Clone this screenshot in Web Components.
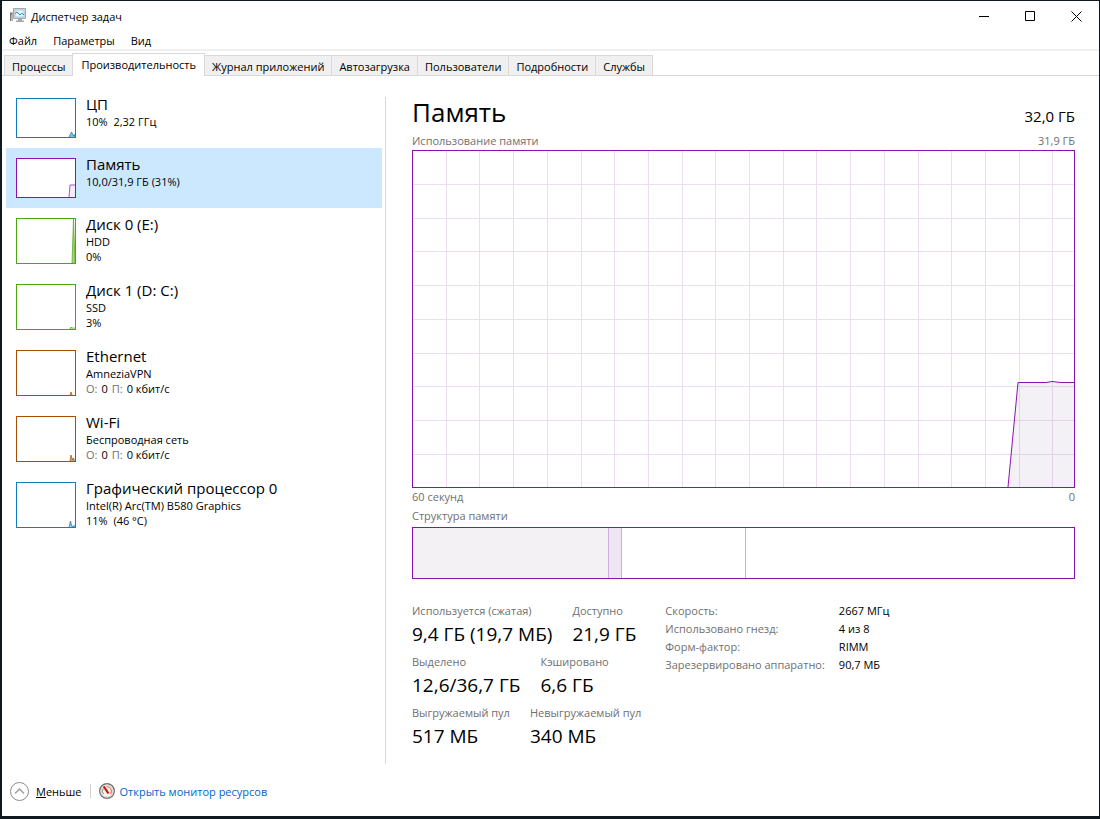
<!DOCTYPE html>
<html lang="ru">
<head>
<meta charset="utf-8">
<meta name="viewport" content="width=device-width, initial-scale=1">
<title>Диспетчер задач</title>
<style>
  body {
    margin: 0;
    background: #101820;
    color: #000;
    font: 11px/15px "Open Sans", "Noto Sans", sans-serif;
    --memory: #8b12ae;
    --muted: #707070;
    --line: #d9d9d9;
  }
</style>
</head>
<body>
<task-window>
  <title-bar slot="title">Диспетчер задач</title-bar>
  <menu-bar slot="menu">
    <menu-entry>Файл</menu-entry>
    <menu-entry>Параметры</menu-entry>
    <menu-entry>Вид</menu-entry>
  </menu-bar>
  <tab-strip slot="tabs">
    <tab-item>Процессы</tab-item>
    <tab-item selected>Производительность</tab-item>
    <tab-item>Журнал приложений</tab-item>
    <tab-item>Автозагрузка</tab-item>
    <tab-item>Пользователи</tab-item>
    <tab-item>Подробности</tab-item>
    <tab-item>Службы</tab-item>
  </tab-strip>

  <resource-item slot="resources" kind="cpu">
    ЦП
    <span slot="info">10%&nbsp; 2,32 ГГц</span>
  </resource-item>
  <resource-item slot="resources" kind="memory" selected>
    Память
    <span slot="info">10,0/31,9 ГБ (31%)</span>
  </resource-item>
  <resource-item slot="resources" kind="hdd">
    Диск 0 (E:)
    <span slot="info">HDD</span>
    <span slot="info">0%</span>
  </resource-item>
  <resource-item slot="resources" kind="ssd">
    Диск 1 (D: C:)
    <span slot="info">SSD</span>
    <span slot="info">3%</span>
  </resource-item>
  <resource-item slot="resources" kind="ethernet">
    Ethernet
    <span slot="info">AmneziaVPN</span>
    <net-rate slot="info" sent="0" received="0 кбит/с"></net-rate>
  </resource-item>
  <resource-item slot="resources" kind="wifi">
    Wi-Fi
    <span slot="info">Беспроводная сеть</span>
    <net-rate slot="info" sent="0" received="0 кбит/с"></net-rate>
  </resource-item>
  <resource-item slot="resources" kind="gpu">
    Графический процессор 0
    <span slot="info">Intel(R) Arc(TM) B580 Graphics</span>
    <span slot="info">11%&nbsp; (46 °C)</span>
  </resource-item>

  <memory-panel slot="panel">
    <span slot="heading">Память</span>
    <span slot="total">32,0 ГБ</span>
    <stat-row slot="stats">
      <stat-value label="Используется (сжатая)">9,4 ГБ (19,7 МБ)</stat-value>
      <stat-value label="Доступно">21,9 ГБ</stat-value>
    </stat-row>
    <stat-row slot="stats">
      <stat-value label="Выделено">12,6/36,7 ГБ</stat-value>
      <stat-value label="Кэшировано">6,6 ГБ</stat-value>
    </stat-row>
    <stat-row slot="stats">
      <stat-value label="Выгружаемый пул">517 МБ</stat-value>
      <stat-value label="Невыгружаемый пул">340 МБ</stat-value>
    </stat-row>
    <memory-details slot="details"></memory-details>
  </memory-panel>

  <window-footer slot="footer"></window-footer>
</task-window>

<script>
const define = (name, html, setup) => {
  const template = document.createElement('template');
  template.innerHTML = html;

  customElements.define(name, class extends HTMLElement {
    constructor() {
      super();
      this.attachShadow({ mode: 'open' });
      this.shadowRoot.appendChild(template.content.cloneNode(true));
    }

    connectedCallback() {
      if (setup) setup(this, this.shadowRoot);
    }
  });
};

define('task-window', `
  <style>
    :host {
      display: flex;
      flex-direction: column;
      box-sizing: border-box;
      min-height: 100vh;
      border: solid #101820;
      border-width: 1px 1px 3px 2px;
      background: #fff;
    }
    main { display: flex; flex: 1; }
    nav {
      flex: none;
      width: 376px;
      padding: 12px 3px 0 4px;
    }
    .divider {
      flex: none;
      width: 1px;
      margin-top: 21px;
      background: var(--line);
    }
    section { display: flex; flex: 1; min-width: 0; }
  </style>
  <slot name="title"></slot>
  <slot name="menu"></slot>
  <slot name="tabs"></slot>
  <main>
    <nav><slot name="resources"></slot></nav>
    <div class="divider"></div>
    <section><slot name="panel"></slot></section>
  </main>
  <slot name="footer"></slot>
`);

define('title-bar', `
  <style>
    :host { display: flex; align-items: center; height: 30px; padding-left: 8px; }
    .icon { flex: none; width: 16px; height: 16px; margin-right: 5px; }
    .caption { flex: 1; }
    button {
      display: flex;
      align-items: center;
      justify-content: center;
      width: 46px;
      height: 30px;
      padding: 0;
      border: 0;
      background: none;
    }
    button svg { width: 11px; height: 11px; fill: none; stroke: #000; }
  </style>
  <svg class="icon" viewBox="0 0 16 16" aria-hidden="true">
    <path d="M0 4h3v9H0z" fill="#b5b5b5"/>
    <path d="M.5 5v8" stroke="#7d7d7d"/>
    <path d="M1 5h1v2H1z" fill="#37b34a"/>
    <path d="M3.500.5h12v10h-12z" fill="#d9dcdf" stroke="#a3a8ac"/>
    <path d="M5 2h9v7H5z" fill="#e2f4fd" stroke="#8fb9d0" stroke-width=".6"/>
    <path d="M5 5.500l2-1.500 3 3 1.500-1.500L14 6.500" fill="none" stroke="#1b8dc9"/>
    <path d="M8 11h4v1.500h2V14H6v-1.500h2z" fill="#a4a8ab"/>
  </svg>
  <span class="caption"><slot></slot></span>
  <button aria-label="Свернуть"><svg viewBox="0 0 11 11"><path d="M0 5.500h10"/></svg></button>
  <button aria-label="Развернуть"><svg viewBox="0 0 11 11"><path d="M.5.5h9v9h-9z"/></svg></button>
  <button aria-label="Закрыть"><svg viewBox="0 0 11 11"><path d="M.5.5l10 10M10.500.5l-10 10"/></svg></button>
`);

define('menu-bar', `
  <style>
    :host {
      display: flex;
      gap: 16px;
      height: 18px;
      padding: 0 7px;
      border-bottom: 2px solid #f0f0f0;
    }
  </style>
  <slot></slot>
`);

define('menu-entry', `
  <style>
    :host { display: block; }
    button {
      display: block;
      padding: 0;
      border: 0;
      background: none;
      color: inherit;
      font: inherit;
      line-height: 20px;
    }
  </style>
  <button><slot></slot></button>
`);

define('tab-strip', `
  <style>
    :host {
      display: flex;
      align-items: flex-end;
      height: 24px;
      padding: 0 2px;
      border-bottom: 1px solid var(--line);
    }
  </style>
  <slot></slot>
`);

define('tab-item', `
  <style>
    :host { display: block; margin-right: -1px; }
    button {
      display: block;
      height: 20px;
      padding: 1px 7px 0;
      border: 1px solid var(--line);
      border-bottom: 0;
      background: #f0f0f0;
      color: inherit;
      font: inherit;
    }
    :host([selected]) { position: relative; z-index: 1; margin-bottom: -1px; }
    :host([selected]) button { height: 23px; padding: 0 8px 2px; background: #fff; }
  </style>
  <button role="tab"><slot></slot></button>
`, (host, root) => {
  root.querySelector('button').setAttribute('aria-selected', host.hasAttribute('selected'));
});

const thumbs = {
  cpu: { color: '#117dbb', height: 40, path: 'M53 39l2.500-5 2 4 1.500-2v3' },
  memory: { color: '#8b12ae', height: 40, path: 'M53 39l1-12h6v12' },
  hdd: { color: '#4da60c', height: 46, path: 'M56 45L57.500 1 59 45' },
  ssd: { color: '#4da60c', height: 46, path: 'M54 45l1-2 1 1h3' },
  ethernet: { color: '#a74f01', height: 46, path: 'M54 45l1-3 1 3' },
  wifi: { color: '#a74f01', height: 46, path: 'M54 45l1-6 1.500 5 1-2 1 3' },
  gpu: { color: '#117dbb', height: 46, path: 'M53 45l1.500-6 1.500 6h2l1-2' }
};

define('resource-item', `
  <style>
    :host { display: block; }
    button {
      display: flex;
      gap: 10px;
      width: 100%;
      padding: 0 10px;
      border: 0;
      background: none;
      color: inherit;
      font: inherit;
      text-align: left;
    }
    :host([selected]) button { background: #cce8ff; }
    svg { display: block; flex: none; width: 60px; margin: 10px 0; background: #fff; }
    path { stroke-opacity: .7; }
    .text { padding-top: 6px; }
    .name { display: block; font-size: 15px; line-height: 20px; }
    ::slotted([slot="info"]) { display: block; }
  </style>
  <button>
    <svg aria-hidden="true"><path/><rect x=".5" y=".5" width="59" fill="none"/></svg>
    <span class="text">
      <span class="name"><slot></slot></span>
      <slot name="info"></slot>
    </span>
  </button>
`, (host, root) => {
  const thumb = thumbs[host.getAttribute('kind')];
  const svg = root.querySelector('svg');
  svg.style.height = thumb.height + 'px';
  svg.setAttribute('viewBox', `0 0 60 ${thumb.height}`);
  svg.setAttribute('stroke', thumb.color);
  svg.querySelector('rect').setAttribute('height', thumb.height - 1);
  const path = svg.querySelector('path');
  path.setAttribute('d', thumb.path);
  path.setAttribute('fill', thumb.color);
  path.setAttribute('fill-opacity', host.getAttribute('kind') === 'memory' ? '.08' : '.5');
});

define('net-rate', `
  <style>
    div { display: flex; gap: 4px; }
    .key { color: var(--muted); }
  </style>
  <div>
    <span class="key">О:</span> <span class="sent"></span>
    <span class="key">П:</span> <span class="received"></span>
  </div>
`, (host, root) => {
  root.querySelector('.sent').textContent = host.getAttribute('sent');
  root.querySelector('.received').textContent = host.getAttribute('received');
});

define('memory-panel', `
  <style>
    :host {
      display: flex;
      flex-direction: column;
      flex: 1;
      min-width: 0;
      padding: 18px 24px 14px 26px;
    }
    header, .caption { display: flex; justify-content: space-between; }
    header { align-items: baseline; height: 38px; }
    h1 { margin: 0; font-size: 26px; font-weight: 400; line-height: 36px; }
    .total { font-size: 15px; }
    .caption { color: var(--muted); line-height: 18px; }
    .caption + .caption { margin-top: 1px; }
    memory-chart { flex: 1; min-height: 200px; }
    memory-structure { margin-top: 2px; }
    .bottom { display: flex; align-items: flex-start; gap: 24px; margin-top: 23px; }
    .stats { display: flex; flex-direction: column; gap: 5px; }
  </style>
  <header>
    <h1><slot name="heading"></slot></h1>
    <span class="total"><slot name="total"></slot></span>
  </header>
  <div class="caption"><span>Использование памяти</span><span>31,9 ГБ</span></div>
  <memory-chart></memory-chart>
  <div class="caption"><span>60 секунд</span><span>0</span></div>
  <div class="caption"><span>Структура памяти</span></div>
  <memory-structure></memory-structure>
  <div class="bottom">
    <div class="stats"><slot name="stats"></slot></div>
    <slot name="details"></slot>
  </div>
`);

define('memory-chart', `
  <style>
    :host { display: flex; border: 1px solid var(--memory); }
    svg { flex: 1; width: 100%; min-width: 0; height: auto; }
    path { fill: none; vector-effect: non-scaling-stroke; }
    .grid { stroke: #ecdef1; shape-rendering: crispEdges; }
    .area { fill: rgba(90, 50, 110, .07); }
    .curve { stroke: var(--memory); }
  </style>
  <svg viewBox="0 0 661 336" preserveAspectRatio="none" role="img" aria-label="Использование памяти">
    <path class="grid"/>
    <path class="area" d="M595 336L605 231.500h28l6-1 9 1h13V336z"/>
    <path class="curve" d="M595 336L605 231.500h28l6-1 9 1h13"/>
  </svg>
`, (host, root) => {
  let d = '';
  for (let i = 1; i < 20; i++) d += `M${Math.round(i * 33.7) - 0.5} 0V336`;
  for (let i = 1; i < 10; i++) d += `M0 ${Math.round(i * 33.75) - 0.5}H661`;
  root.querySelector('.grid').setAttribute('d', d);
});

define('memory-structure', `
  <style>
    :host { display: flex; height: 50px; border: 1px solid var(--memory); }
    div { box-sizing: border-box; border-right: 1px solid #cfaddb; }
    .used { width: 29.7%; background: #f4f1f5; }
    .modified { width: 1.9%; background: #ede5f1; }
    .standby { width: 18.8%; }
  </style>
  <div class="used"></div>
  <div class="modified"></div>
  <div class="standby"></div>
`);

define('stat-row', `
  <style>
    :host { display: flex; gap: 20px; }
  </style>
  <slot></slot>
`);

define('stat-value', `
  <style>
    :host { display: block; white-space: nowrap; }
    .label { color: var(--muted); line-height: 18px; }
    .value { font-size: 19px; line-height: 28px; }
  </style>
  <div class="label"></div>
  <div class="value"><slot></slot></div>
`, (host, root) => {
  root.querySelector('.label').textContent = host.getAttribute('label');
});

define('memory-details', `
  <style>
    :host { display: block; }
    dl {
      display: grid;
      grid-template-columns: auto auto;
      column-gap: 14px;
      margin: 0;
      line-height: 18px;
      white-space: nowrap;
    }
    dt { color: var(--muted); }
    dd { margin: 0; }
  </style>
  <dl>
    <dt>Скорость:</dt><dd>2667 МГц</dd>
    <dt>Использовано гнезд:</dt><dd>4 из 8</dd>
    <dt>Форм-фактор:</dt><dd>RIMM</dd>
    <dt>Зарезервировано аппаратно:</dt><dd>90,7 МБ</dd>
  </dl>
`);

define('window-footer', `
  <style>
    :host { display: flex; align-items: center; height: 50px; padding: 2px 8px 0; }
    button, a { display: flex; align-items: center; }
    button { gap: 7px; padding: 0; border: 0; background: none; color: inherit; font: inherit; }
    a { gap: 5px; color: #0066cc; text-decoration: none; }
    svg { flex: none; }
    .separator { width: 1px; height: 14px; margin: 0 8px; background: #d0d0d0; }
  </style>
  <button>
    <svg width="19" height="19" viewBox="0 0 19 19" fill="none" stroke="#8c8c8c" aria-hidden="true">
      <circle cx="9.500" cy="9.500" r="9"/>
      <path d="M5 11.500L9.500 7l4.500 4.500" stroke="#a0a0a0" stroke-width="1.500"/>
    </svg>
    <span><u>М</u>еньше</span>
  </button>
  <div class="separator"></div>
  <a href="#resmon">
    <svg width="16" height="16" viewBox="0 0 16 16" fill="none" aria-hidden="true">
      <circle cx="8" cy="8" r="7.300" fill="#f6f3ef" stroke="#77736e" stroke-width="1.400"/>
      <circle cx="8" cy="8" r="6" stroke="#d9d5d0"/>
      <path d="M4.500 11A4.600 4.600 0 0 1 4.200 5.500" stroke="#8d8a86"/>
      <path d="M7.500 3.600A4.600 4.600 0 0 1 11.500 11" stroke="#e5855c" stroke-width="1.200"/>
      <path d="M4.700 3.500L9.500 10.500" stroke="#c8101a" stroke-width="2.200"/>
    </svg>
    <span>Открыть монитор ресурсов</span>
  </a>
`);
</script>
</body>
</html>
